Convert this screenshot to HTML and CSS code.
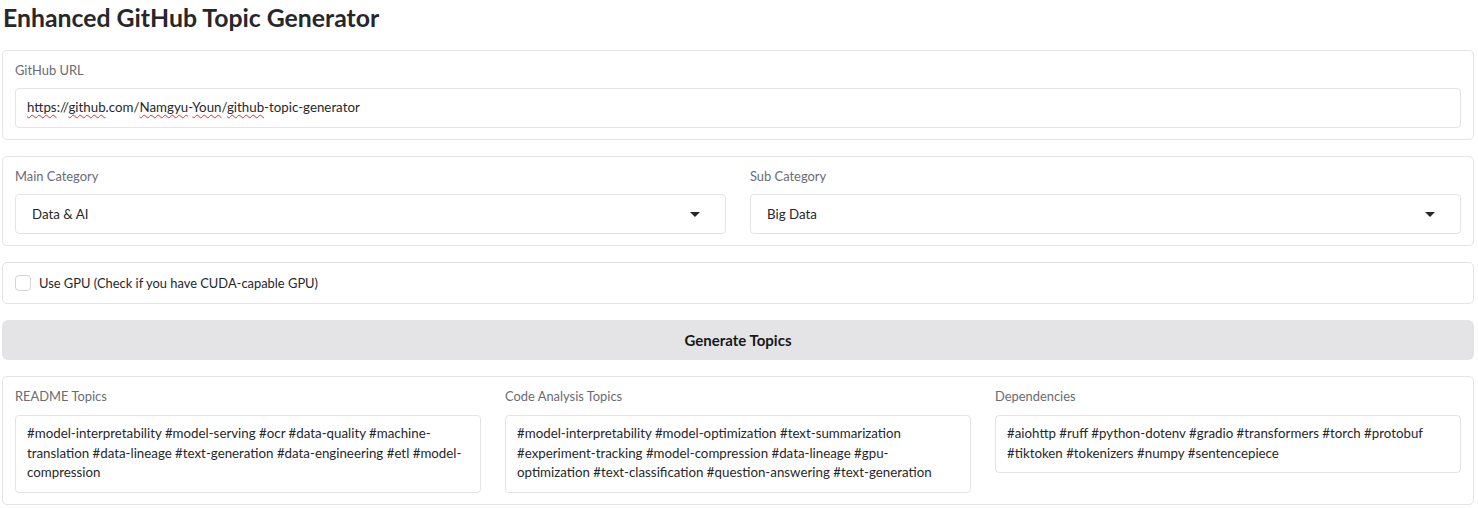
FILE: index.html
```html
<!DOCTYPE html>
<html>
<head>
<meta charset="utf-8">
<link rel="stylesheet" href="styles.css">
</head>
<body>
<div class="page">
  <h1 class="title">Enhanced GitHub Topic Generator</h1>

  <div class="block">
    <div class="label">GitHub URL</div>
    <div class="input"><span class="spell">https</span>://<span class="spell">github</span>.com/<span class="spell">Namgyu</span>-<span class="spell">Youn</span>/<span class="spell">github</span>-topic-generator</div>
  </div>

  <div class="block cols2">
    <div class="field">
      <div class="label">Main Category</div>
      <div class="select"><span>Data &amp; AI</span><span class="caret"></span></div>
    </div>
    <div class="field">
      <div class="label">Sub Category</div>
      <div class="select"><span>Big Data</span><span class="caret"></span></div>
    </div>
  </div>

  <div class="block check-block">
    <span class="checkbox"></span>
    <span class="check-label">Use GPU (Check if you have CUDA-capable GPU)</span>
  </div>

  <button class="btn">Generate Topics</button>

  <div class="block cols3">
    <div class="field">
      <div class="label">README Topics</div>
      <div class="textarea">#model-interpretability #model-serving #ocr #data-quality #machine-translation #data-lineage #text-generation #data-engineering #etl #model-compression</div>
    </div>
    <div class="field">
      <div class="label">Code Analysis Topics</div>
      <div class="textarea">#model-interpretability #model-optimization #text-summarization #experiment-tracking #model-compression #data-lineage #gpu-optimization #text-classification #question-answering #text-generation</div>
    </div>
    <div class="field">
      <div class="label">Dependencies</div>
      <div class="textarea">#aiohttp #ruff #python-dotenv #gradio #transformers #torch #protobuf #tiktoken #tokenizers #numpy #sentencepiece</div>
    </div>
  </div>
</div>
</body>
</html>
```

FILE: styles.css
```css
* { box-sizing: border-box; }
html, body { margin: 0; padding: 0; background: #ffffff; }
body {
  font-family: "Lato", "Noto Sans", sans-serif;
  color: #27272a;
  font-size: 13.3px;
}
.page {
  width: 1472px;
  margin-left: 2px;
  display: flex;
  flex-direction: column;
  gap: 16px;
}
.title {
  margin: 0 0 -2px 1px;
  font-size: 24.8px;
  line-height: 36px;
  font-weight: 700;
  color: #27272a;
}
.block {
  border: 1px solid #e4e4e7;
  border-radius: 5px;
  padding: 9px 12px 11px;
  background: #fff;
}
.label {
  font-size: 12.9px;
  line-height: 20px;
  color: #6b6b73;
  margin-bottom: 8px;
}
.input {
  border: 1px solid #e4e4e7;
  border-radius: 4px;
  height: 40px;
  padding: 8px 11px 0;
  line-height: 20px;
}
.spell {
  text-decoration: underline wavy #e0312f;
  text-decoration-thickness: 1px;
  text-underline-offset: 2px;
}
.cols2 {
  display: grid;
  grid-template-columns: 1fr 1fr;
  column-gap: 24px;
}
.cols3 {
  display: grid;
  grid-template-columns: 1fr 1fr 1fr;
  column-gap: 24px;
}
.cols3 .label { margin-bottom: 9px; }
.select {
  border: 1px solid #e4e4e7;
  border-radius: 4px;
  height: 40px;
  padding: 0 25px 0 16px;
  display: flex;
  align-items: center;
  justify-content: space-between;
}
.caret {
  width: 0;
  height: 0;
  border-left: 5px solid transparent;
  border-right: 5px solid transparent;
  border-top: 5px solid #27272a;
}
.check-block {
  display: flex;
  align-items: center;
  gap: 8px;
  padding: 11px 12px;
  line-height: 18px;
}
.check-label { font-size: 12.9px; }
.checkbox {
  width: 16px;
  height: 16px;
  border: 1px solid #d4d4d8;
  border-radius: 4px;
  background: #fff;
}
.btn {
  height: 40px;
  border: none;
  border-radius: 6px;
  background: #e4e4e7;
  font-family: inherit;
  font-size: 15px;
  font-weight: 700;
  color: #18181b;
  padding: 0;
}
.field { display: flex; flex-direction: column; }
.textarea {
  border: 1px solid #e4e4e7;
  border-radius: 4px;
  padding: 8px 13px 9px 11px;
  line-height: 19.5px;
}
.cols3 .field:nth-child(3) { align-self: start; }
```
